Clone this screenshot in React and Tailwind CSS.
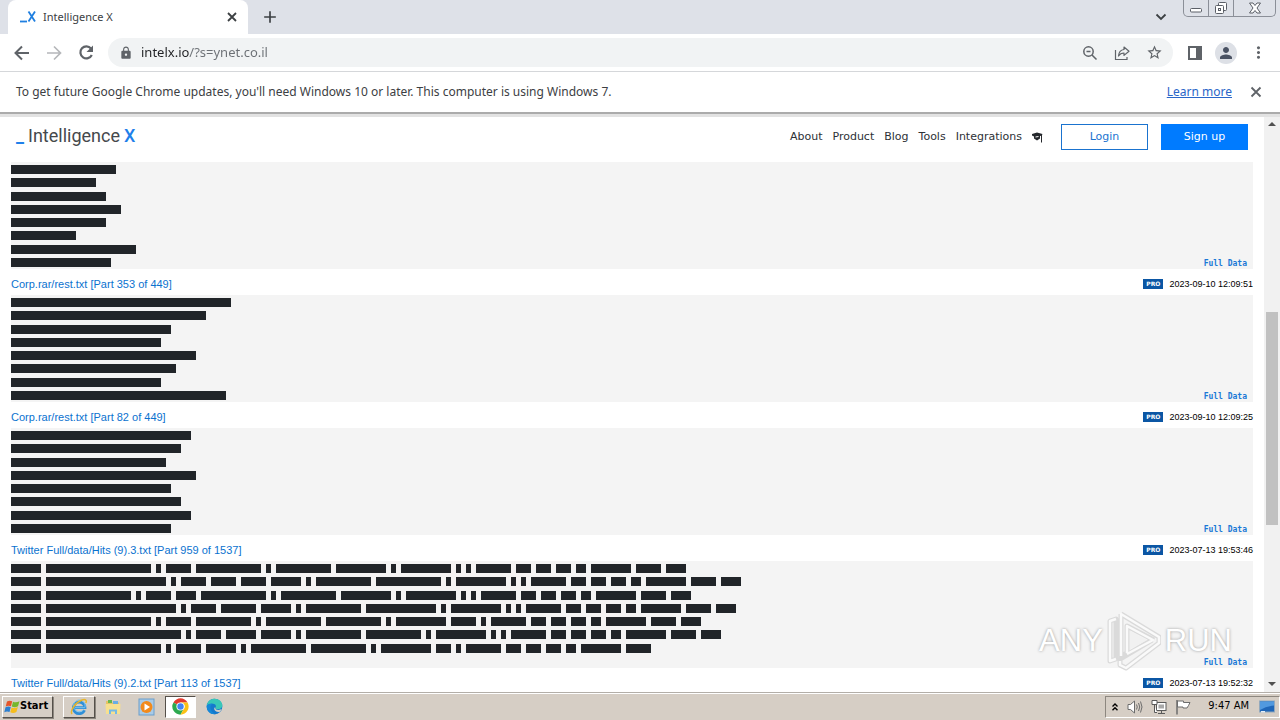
import React from "react";
import {
  MdLock,
  MdStarBorder,
  MdMoreVert,
  MdPerson,
  MdAdd,
} from "react-icons/md";

const results = [
  {
    title: null,
    date: null,
    lines: [[21], [17], [19], [22], [19], [13], [25], [20]],
  },
  {
    title: "Corp.rar/rest.txt [Part 353 of 449]",
    date: "2023-09-10 12:09:51",
    lines: [[44], [39], [32], [30], [37], [33], [30], [43]],
  },
  {
    title: "Corp.rar/rest.txt [Part 82 of 449]",
    date: "2023-09-10 12:09:25",
    lines: [[36], [34], [31], [37], [32], [34], [36], [32]],
  },
  {
    title: "Twitter Full/data/Hits (9).3.txt [Part 959 of 1537]",
    date: "2023-07-13 19:53:46",
    lines: [
      [6, 21, 1, 5, 13, 1, 11, 10, 1, 10, 1, 1, 7, 3, 3, 3, 2, 8, 5, 4],
      [6, 24, 1, 5, 5, 5, 6, 1, 11, 13, 1, 10, 1, 1, 7, 3, 3, 3, 2, 8, 5, 4],
      [6, 17, 1, 5, 4, 13, 1, 11, 10, 1, 10, 1, 1, 7, 3, 3, 3, 2, 8, 5, 4],
      [6, 26, 1, 5, 7, 6, 1, 11, 14, 1, 10, 1, 1, 7, 3, 3, 3, 2, 8, 5, 4],
      [6, 21, 1, 5, 11, 1, 11, 11, 1, 10, 5, 1, 7, 3, 3, 3, 2, 8, 5, 4],
      [6, 27, 1, 5, 6, 6, 1, 11, 11, 1, 10, 1, 1, 7, 3, 3, 3, 2, 8, 5, 4],
      [6, 23, 1, 5, 6, 1, 11, 11, 1, 10, 3, 1, 7, 3, 3, 3, 2, 8, 5],
      [],
    ],
  },
  {
    title: "Twitter Full/data/Hits (9).2.txt [Part 113 of 1537]",
    date: "2023-07-13 19:52:32",
    lines: [],
  },
];

// Width in pixels of one hidden character.
const CHAR = 5;

function Result({ title, date, lines }) {
  return (
    <article>
      {title && (
        <div className="flex h-[26px] items-end justify-between pb-[3px] leading-4">
          <a href="#result" className="text-[11px] text-[#0b72cf]">
            {title}
          </a>
          <div className="flex items-center gap-[6px]">
            <span className="bg-[#0b56a4] px-[3px] font-['DejaVu_Sans',sans-serif] text-[6px] leading-[10px] font-bold text-white">
              PRO
            </span>
            <time className="text-[9px] text-black">{date}</time>
          </div>
        </div>
      )}
      {lines.length > 0 && (
        <div className="relative flex h-[107px] flex-col justify-between bg-[#f4f4f4] pt-[3px] pb-[2px]">
          {lines.map((words, i) => (
            <div key={i} className="flex h-[9px] gap-[5px]">
              {words.map((n, j) => (
                <span key={j} className="bg-[#212529]" style={{ width: n * CHAR }} />
              ))}
            </div>
          ))}
          <a
            href="#full"
            className="absolute right-[6px] bottom-0 font-['DejaVu_Sans_Mono',monospace] text-[8px] leading-[10px] font-bold text-[#1a78d6]"
          >
            Full Data
          </a>
        </div>
      )}
    </article>
  );
}

function XMark() {
  return (
    <svg className="h-4 w-4" viewBox="0 0 16 16" fill="none" stroke="#1f7fe0">
      <path d="M0 12.500h7" strokeWidth="1.800" />
      <path d="M8.500 2.500l6.500 10M15 2.500l-6.500 10" strokeWidth="1.800" />
    </svg>
  );
}

function TabStrip() {
  return (
    <div className="flex h-[34px] shrink-0 items-stretch bg-[#dee1e8] pl-2 font-['Noto_Sans',sans-serif]">
      <div className="flex w-60 items-center rounded-t-lg bg-white px-3">
        <XMark />
        <span className="ml-[7px] flex-1 text-[11px] text-[#3c4043]">Intelligence X</span>
        <button aria-label="Close tab" className="-mr-1 text-[#3c4043]">
          <svg className="h-4 w-4" viewBox="0 0 16 16" fill="none" stroke="currentColor" strokeWidth="1.800">
            <path d="M4 4l8 8M12 4l-8 8" />
          </svg>
        </button>
      </div>
      <button aria-label="New tab" className="ml-3 text-[#3c4043]">
        <MdAdd size={20} />
      </button>
      <div className="flex-1" />
      <button aria-label="Search tabs" className="mr-4 text-[#3c4043]">
        <svg className="h-3 w-3" viewBox="0 0 12 12" fill="none" stroke="currentColor" strokeWidth="1.800">
          <path d="M1.500 3.500L6 8l4.500-4.500" />
        </svg>
      </button>
      <div className="mr-1 flex h-[17px] rounded-b-[5px] border border-t-0 border-[#8b8f98] text-[#5b5f67]">
        <button aria-label="Minimize" className="flex w-[25px] items-center justify-center border-r border-[#8b8f98]">
          <svg className="h-4 w-4" viewBox="0 0 16 16" fill="#fff" stroke="currentColor">
            <rect x="2.500" y="8.500" width="11" height="3.500" rx="1" />
          </svg>
        </button>
        <button aria-label="Restore" className="flex w-[25px] items-center justify-center border-r border-[#8b8f98]">
          <svg className="h-4 w-4" viewBox="0 0 16 16" fill="#fff" stroke="currentColor">
            <rect x="5.500" y="2.500" width="8" height="8" rx="1" />
            <rect x="2.500" y="5.500" width="8" height="8" rx="1" />
            <rect x="5.500" y="8.500" width="2" height="2" />
          </svg>
        </button>
        <button aria-label="Close window" className="flex w-[41px] items-center justify-center">
          <svg className="h-4 w-4" viewBox="0 0 16 16" fill="#fff" stroke="currentColor">
            <path d="M2.500 3h3.500l2 2.500L10 3h3.500L10 8l3.500 5H10l-2-2.500L6 13H2.500L6 8z" />
          </svg>
        </button>
      </div>
    </div>
  );
}

function Toolbar() {
  return (
    <div className="flex h-[38px] shrink-0 items-center border-b border-[#d5d7da] bg-white pr-3 pl-[13px] text-[#5f6368]">
      <div className="flex gap-[14px]">
        <button aria-label="Back">
          <svg className="h-[18px] w-[18px]" viewBox="0 0 18 18" fill="none" stroke="currentColor" strokeWidth="2">
            <path d="M16 9H3M9 2.500L2.500 9 9 15.500" />
          </svg>
        </button>
        <button aria-label="Forward" className="text-[#b5b7ba]">
          <svg className="h-[18px] w-[18px]" viewBox="0 0 18 18" fill="none" stroke="currentColor" strokeWidth="1.700">
            <path d="M2 9h13M9 2.500L15.500 9 9 15.500" />
          </svg>
        </button>
        <button aria-label="Reload">
          <svg className="h-[19px] w-[19px]" viewBox="0 0 19 19" fill="none" stroke="currentColor" strokeWidth="2.200">
            <path d="M14.800 12A6 6 0 1 1 14 5.500" />
            <path d="M16 2.500v6.500H9.500z" fill="currentColor" stroke="none" />
          </svg>
        </button>
      </div>
      <div className="ml-3 flex h-[29px] flex-1 items-center rounded-full bg-[#f1f3f4] pr-[10px] pl-[11px]">
        <MdLock size={14} />
        <input
          aria-label="Address"
          defaultValue="intelx.io/?s=ynet.co.il"
          className="ml-2 min-w-0 flex-1 bg-transparent bg-[linear-gradient(90deg,#202124_48px,#6b6f74_48px)] bg-clip-text font-['Noto_Sans',sans-serif] text-[13px] text-transparent outline-none"
        />
        <div className="flex items-center gap-4">
          <button aria-label="Zoom">
            <svg className="h-4 w-4" viewBox="0 0 16 16" fill="none" stroke="currentColor" strokeWidth="1.500">
              <circle cx="6.500" cy="6.500" r="4.700" />
              <path d="M10 10l4.500 4.500M4.500 6.500h4" />
            </svg>
          </button>
          <button aria-label="Share">
            <svg className="h-4 w-4" viewBox="0 0 16 16" fill="none" stroke="currentColor" strokeWidth="1.200">
              <path d="M1.500 5v9.500h11.500V12" />
              <path d="M10 2l5 4.200-5 4.200V8C7.500 8 5.800 9 4.500 11 4.800 7.500 6.800 4.900 10 4.500z" strokeLinejoin="round" />
            </svg>
          </button>
          <button aria-label="Bookmark">
            <MdStarBorder size={17} />
          </button>
        </div>
      </div>
      <div className="ml-[14px] flex items-center gap-3">
        <button aria-label="Side panel">
          <svg className="h-4 w-4" viewBox="0 0 16 16" fill="currentColor">
            <path d="M1 1h14v14H1zM3 3v10h6V3z" fillRule="evenodd" />
          </svg>
        </button>
        <button aria-label="Profile" className="flex h-[22px] w-[22px] items-center justify-center rounded-full bg-[#dde0e6] text-[#4a5263]">
          <MdPerson size={18} />
        </button>
        <button aria-label="Menu">
          <MdMoreVert size={19} />
        </button>
      </div>
    </div>
  );
}

function InfoBar() {
  return (
    <div className="flex h-10 shrink-0 items-center bg-white pr-4 pl-4 font-['Noto_Sans',sans-serif] text-[12px] text-[#3c4043]">
      <p className="flex-1">
        To get future Google Chrome updates, you'll need Windows 10 or later. This computer is using Windows 7.
      </p>
      <a href="#learn" className="text-[#2a66c8] underline">
        Learn more
      </a>
      <button aria-label="Dismiss" className="ml-4 text-[#5f6368]">
        <svg className="h-4 w-4" viewBox="0 0 16 16" fill="none" stroke="currentColor" strokeWidth="1.800">
          <path d="M3.500 3.500l9 9M12.500 3.500l-9 9" />
        </svg>
      </button>
    </div>
  );
}

function SiteHeader() {
  return (
    <header className="flex h-[45px] shrink-0 items-start justify-between px-4 pt-[7px]">
      <a href="#home" className="flex items-center gap-1 font-['Roboto',sans-serif] text-[18px] leading-6 text-[#45484c]">
        <span className="font-bold text-[#1f80ea]">_</span>
        <span>Intelligence</span>
        <span className="font-medium text-[#1f80ea]">X</span>
      </a>
      <div className="flex items-center font-['DejaVu_Sans',sans-serif] text-[11px] text-[#2d3136]">
        <nav className="flex items-center gap-[10px]">
          <a href="#about">About</a>
          <a href="#product">Product</a>
          <a href="#blog">Blog</a>
          <a href="#tools">Tools</a>
          <a href="#integrations">Integrations</a>
          <a href="#academy" aria-label="Academy">
            <svg className="h-[11px] w-[11px]" viewBox="0 0 11 11" fill="#25282c">
              <path d="M0 2l5-1.500L10.500 2 10 3v7.500H9V3.800L8 4v2.500L5 8.500 2 6.500V4.500L0 3.500zM3.500 4.500v1l3-.5v-1z" />
            </svg>
          </a>
        </nav>
        <button className="ml-[18px] h-[26px] w-[87px] border border-[#1a73cf] bg-white text-[#1a73cf]">Login</button>
        <button className="ml-[13px] h-[26px] w-[87px] bg-[#007bff] text-white">Sign up</button>
      </div>
    </header>
  );
}

function ScrollBar() {
  return (
    <div className="flex w-4 shrink-0 flex-col items-center bg-[#f1f1f1] py-[2px] text-[#505050]">
      <svg className="h-3 w-3" viewBox="0 0 12 12" fill="currentColor">
        <path d="M2 7l4-4 4 4z" />
      </svg>
      <div className="flex-[181]" />
      <div className="w-3 flex-[212] bg-[#c1c1c1]" />
      <div className="flex-[153]" />
      <svg className="h-3 w-3" viewBox="0 0 12 12" fill="currentColor">
        <path d="M2 4l4 4 4-4z" />
      </svg>
    </div>
  );
}

function Watermark() {
  return (
    <div
      aria-hidden="true"
      className="pointer-events-none absolute right-12 bottom-5 flex items-center gap-1 font-['Liberation_Sans_Narrow','Liberation_Sans',sans-serif] text-[31px] leading-8 text-white [text-shadow:0_0_3px_#999]"
    >
      <span>ANY</span>
      <svg className="h-[62px] w-[54px]" viewBox="0 0 54 62" fill="none" strokeLinejoin="round">
        <g stroke="#dadada" strokeWidth="5">
          <path d="M9 9L3 11v40l6-2zM14 4v42l6-3V16l27 14" />
          <path d="M14 4l38 23v6L19 58l-6-3v-6l32-19" />
        </g>
        <g stroke="#fafafa" strokeWidth="2.500">
          <path d="M9 9L3 11v40l6-2" />
          <path d="M14 46V4l38 23v6L19 58l-6-3v-4" />
          <path d="M20 43V16l26 14-26 14" />
        </g>
        <path d="M23 21l17 9-17 9z" fill="#f1f1f1" />
      </svg>
      <span>RUN</span>
    </div>
  );
}

function WindowsFlag() {
  return (
    <svg className="h-4 w-4" viewBox="0 0 16 16">
      <path d="M3 2.500C5 1.300 6.500 1.500 8.200 2.300L7 7.300C5.300 6.500 3.600 6.500 1.700 7.500z" fill="#e5562a" />
      <path d="M9 2.700c2 .8 4 .8 6.500-.5l-1.500 5c-2.300 1.200-4.200 1.200-6.200.3z" fill="#75b72c" />
      <path d="M1.500 8.300c2-1 3.600-1 5.300-.2l-1.300 5c-1.700-.8-3.300-.8-5.200.2z" fill="#2c7fd0" />
      <path d="M7.600 8.400c2 .9 4 .9 6.300-.3l-1.500 5c-2.100 1.100-4.200 1.100-6.100.2z" fill="#f6bd1d" />
    </svg>
  );
}

function IeIcon() {
  return (
    <svg className="h-[18px] w-[18px]" viewBox="0 0 18 18" fill="none">
      <path d="M14.500 12.200A5.800 5.800 0 1 1 15 9.700H4.500" stroke="#2f8fd8" strokeWidth="2.800" />
      <path d="M13.800 11.500A5.800 5.800 0 1 1 14.800 9.700H5" stroke="#7cc6f2" strokeWidth="1" />
      <path d="M2 16C-.5 12.500 6 4 12 2c4-1.300 5 .8 3.800 3" stroke="#e7b52c" strokeWidth="1.500" />
    </svg>
  );
}

function FolderIcon() {
  return (
    <svg className="h-[18px] w-[18px]" viewBox="0 0 18 18">
      <path d="M2 3h5l1 1.500h7V15H2z" fill="#e7c463" />
      <path d="M4 2h4v3H4z" fill="#67b84e" />
      <path d="M9 3h5v3H9z" fill="#6aaee4" />
      <path d="M1.500 6h15L16 16H2z" fill="#f7e08f" />
      <path d="M5 16v-4.500h8V16h-2v-2.500H7V16z" fill="#74b9e6" />
    </svg>
  );
}

function MediaIcon() {
  return (
    <svg className="h-[18px] w-[18px]" viewBox="0 0 18 18">
      <rect x="1" y="1" width="15" height="16" fill="#a9cbe7" stroke="#6a9ecb" />
      <circle cx="8.500" cy="9" r="6" fill="#f28a1c" />
      <path d="M6.500 5.500v7l5.500-3.500z" fill="#fff" />
    </svg>
  );
}

function ChromeIcon() {
  return (
    <svg className="h-[17px] w-[17px]" viewBox="0 0 48 48">
      <circle cx="24" cy="24" r="23" fill="#fff" />
      <path d="M24 24L4.080 12.500A23 23 0 0 1 43.900 12.500H24z" fill="#e33b2e" />
      <path d="M4.080 12.500A23 23 0 0 0 24 47l10-17.300L24 24z" fill="#2da94f" />
      <path d="M43.900 12.500A23 23 0 0 1 24 47l10-17.300A11.500 11.500 0 0 0 34 18.200L24 12.500z" fill="#fbc116" />
      <circle cx="24" cy="24" r="11.500" fill="#fff" />
      <circle cx="24" cy="24" r="9" fill="#4285f4" />
    </svg>
  );
}

function EdgeIcon() {
  return (
    <svg className="h-[17px] w-[17px]" viewBox="0 0 18 18">
      <circle cx="9" cy="9" r="8.300" fill="#1579cc" />
      <path d="M.8 8C1.500 3.500 5 .7 9 .7c5 0 8.300 3.600 8.300 7 0 3-2.300 4.300-4.700 4.300-2 0-3-.8-2.400-1.700C11 9 10.500 6.500 7.500 6.200 4.500 5.900 2 7 .8 8z" fill="#38c7b8" />
      <path d="M.7 9C1.500 6.500 4.500 5.400 7 6c-2 1.200-2.700 3.300-2 5.600.8 2.500 2.800 4.700 5.500 5.500C5 18 .7 14 .7 9z" fill="#1688d8" />
      <path d="M10 10.300c-.5 1 .5 2.500 3.500 2.300 1.300-.1 2.300-.5 3.200-1-.5 1.200-1.200 2.100-2 2.900-3 .8-6-1-6-3.200 0-1 .5-1.500 1.300-1z" fill="#d6cec5" />
    </svg>
  );
}

function TaskBar() {
  const raised = "border border-t-white border-l-white border-r-[#55504a] border-b-[#55504a] shadow-[1px_1px_0_#8d877f]";
  return (
    <footer className="flex h-7 shrink-0 items-center border-t border-[#b3aea8] bg-[#d6cec5] pl-[2px] font-['DejaVu_Sans_Condensed','DejaVu_Sans',sans-serif] text-[11px] text-black shadow-[inset_0_1px_0_#fff]">
      <button className={`flex h-[22px] w-[51px] items-center pl-[1px] font-bold ${raised}`}>
        <WindowsFlag />
        <span>Start</span>
      </button>
      <button aria-label="Internet Explorer" className={`ml-[10px] flex h-[22px] w-8 items-center justify-center ${raised}`}>
        <IeIcon />
      </button>
      <button aria-label="File Explorer" className="ml-[9px] flex w-[18px]">
        <FolderIcon />
      </button>
      <button aria-label="Media Player" className="ml-4 flex w-[18px]">
        <MediaIcon />
      </button>
      <button
        aria-label="Google Chrome"
        className="ml-[9px] flex h-[22px] w-[31px] items-center justify-center border border-t-[#55504a] border-r-white border-b-white border-l-[#55504a] bg-white"
      >
        <ChromeIcon />
      </button>
      <button aria-label="Microsoft Edge" className="ml-[10px] flex">
        <EdgeIcon />
      </button>
      <div className="ml-auto flex h-[22px] items-center border border-t-[#8d877f] border-r-white border-b-white border-l-[#8d877f] pr-1 pl-[5px]">
        <button aria-label="Show hidden icons">
          <svg className="h-2 w-2" viewBox="0 0 8 8" fill="none" stroke="#000" strokeWidth="1.400">
            <path d="M1.500 3.500L4 1l2.500 2.500M1.500 7.200L4 4.700l2.500 2.500" />
          </svg>
        </button>
        <div className="ml-2 flex gap-2">
          <svg className="h-4 w-4" viewBox="0 0 16 16" fill="#fff" stroke="#6c6c6c">
            <path d="M1 5.500h2.500L7.500 2v12L3.500 10.500H1z" />
            <path d="M9.500 5.500q1.500 2.500 0 5M11.500 4q2.500 4 0 8M13.500 2.500q3 5.500 0 11" fill="none" />
          </svg>
          <svg className="h-4 w-4" viewBox="0 0 16 16" fill="#fff" stroke="#5a5a5a">
            <rect x="5.500" y="3.500" width="9.500" height="8" />
            <rect x="7.500" y="5.500" width="5.500" height="4" fill="#a8a8a8" stroke="none" />
            <path d="M7 14.500h7M10.500 12v2" />
            <path d="M1 1.500h5v4H1zM3.500 5.500v8H6" />
          </svg>
          <svg className="h-4 w-4" viewBox="0 0 16 16" fill="#fff" stroke="#6c6c6c">
            <path d="M2 1v14.500" strokeWidth="1.500" />
            <path d="M2.500 2h6v1.500H15L13.500 6.500 12 9H8V8H2.500z" />
          </svg>
        </div>
        <time className="ml-[17px]">9:47 AM</time>
        <svg className="ml-[10px] h-[14px] w-4" viewBox="0 0 16 14">
          <rect x="0.500" y="1" width="15" height="11" fill="#1f66b8" stroke="#93a9bd" />
          <path d="M1 1.500h14v4Q7 6 1 10z" fill="#5199df" />
          <path d="M2 11h4v1.500H2z" fill="#e6edf3" />
        </svg>
      </div>
    </footer>
  );
}

export default function App() {
  return (
    <div className="flex h-screen flex-col overflow-hidden bg-white">
      <TabStrip />
      <Toolbar />
      <InfoBar />
      <div className="h-[5px] shrink-0 border-t-2 border-[#ababab] bg-[#e2e2e2]" />
      <div className="relative flex min-h-0 flex-1">
        <div className="flex min-w-0 flex-1 flex-col overflow-hidden font-['Liberation_Sans',Arial,sans-serif]">
          <SiteHeader />
          <main className="min-h-0 flex-1 overflow-hidden pr-[11px] pl-[11px]">
            {results.map((r, i) => (
              <Result key={i} {...r} />
            ))}
          </main>
        </div>
        <ScrollBar />
        <Watermark />
      </div>
      <TaskBar />
    </div>
  );
}
